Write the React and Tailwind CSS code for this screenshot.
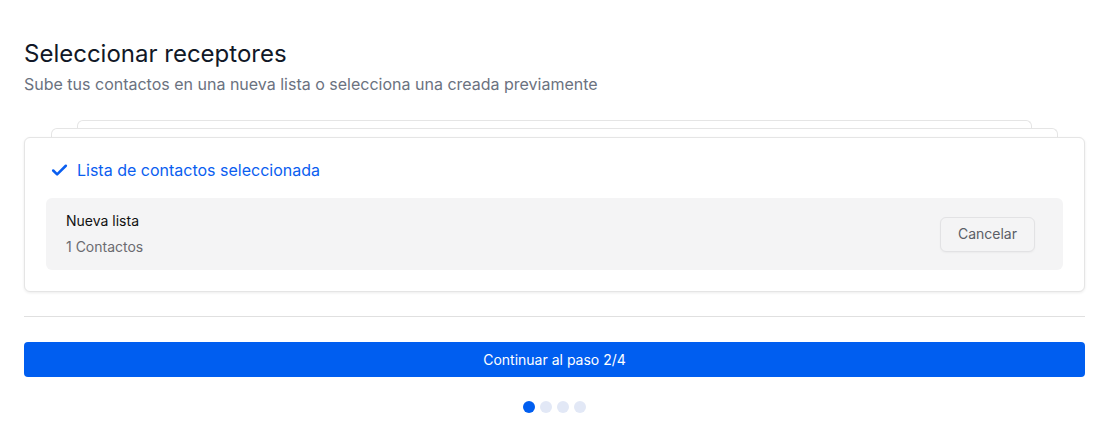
import { Check } from 'lucide-react'

export default function App() {
  return (
    <div className="min-h-screen bg-white pl-6 pr-[18px] pt-[38px] font-['Inter',sans-serif] text-gray-900">
      <h1 className="text-2xl leading-8 text-[#111827]">Seleccionar receptores</h1>
      <p className="mt-[2px] text-base text-[#6b7280]">Sube tus contactos en una nueva lista o selecciona una creada previamente</p>

      {/* tarjetas apiladas */}
      <div className="mt-6">
        <div className="mx-[53px] h-[8px] rounded-t-md border border-b-0 border-[#e5e5e5] bg-white" />
        <div className="mx-[27px] h-[9px] rounded-t-md border border-b-0 border-[#e5e5e5] bg-white" />
        <div className="rounded-md border border-[#e5e5e5] bg-white px-[21px] pt-[20px] pb-[21px] shadow-[0_1px_3px_rgba(0,0,0,0.08)]">
          <div className="flex items-center gap-2 pl-1 text-[#0a5ef0]">
            <Check size={19} strokeWidth={3.2} />
            <span className="text-base">Lista de contactos seleccionada</span>
          </div>
          <div className="mt-4 flex items-center justify-between rounded-md bg-[#f4f4f5] py-[13px] pl-5 pr-7">
            <div className="text-sm">
              <div className="text-[#111]">Nueva lista</div>
              <div className="mt-[6px] text-[#6b6b70]">1 Contactos</div>
            </div>
            <button className="h-[35px] rounded-md border border-[#e2e2e4] bg-[#f4f4f5] px-[17px] text-sm text-[#5b5e66] shadow-[0_1px_2px_rgba(0,0,0,0.04)]">
              Cancelar
            </button>
          </div>
        </div>
      </div>

      <div className="mt-6 border-t border-[#e0e0e0]" />

      <button className="mt-[25px] h-[35px] w-full rounded-sm bg-[#005ef0] text-sm text-white">
        Continuar al paso 2/4
      </button>

      <div className="mt-[24px] flex justify-center gap-[5px]">
        <span className="h-3 w-3 rounded-full bg-[#005ef0]" />
        <span className="h-3 w-3 rounded-full bg-[#e2e8f6]" />
        <span className="h-3 w-3 rounded-full bg-[#e2e8f6]" />
        <span className="h-3 w-3 rounded-full bg-[#e2e8f6]" />
      </div>
    </div>
  )
}
